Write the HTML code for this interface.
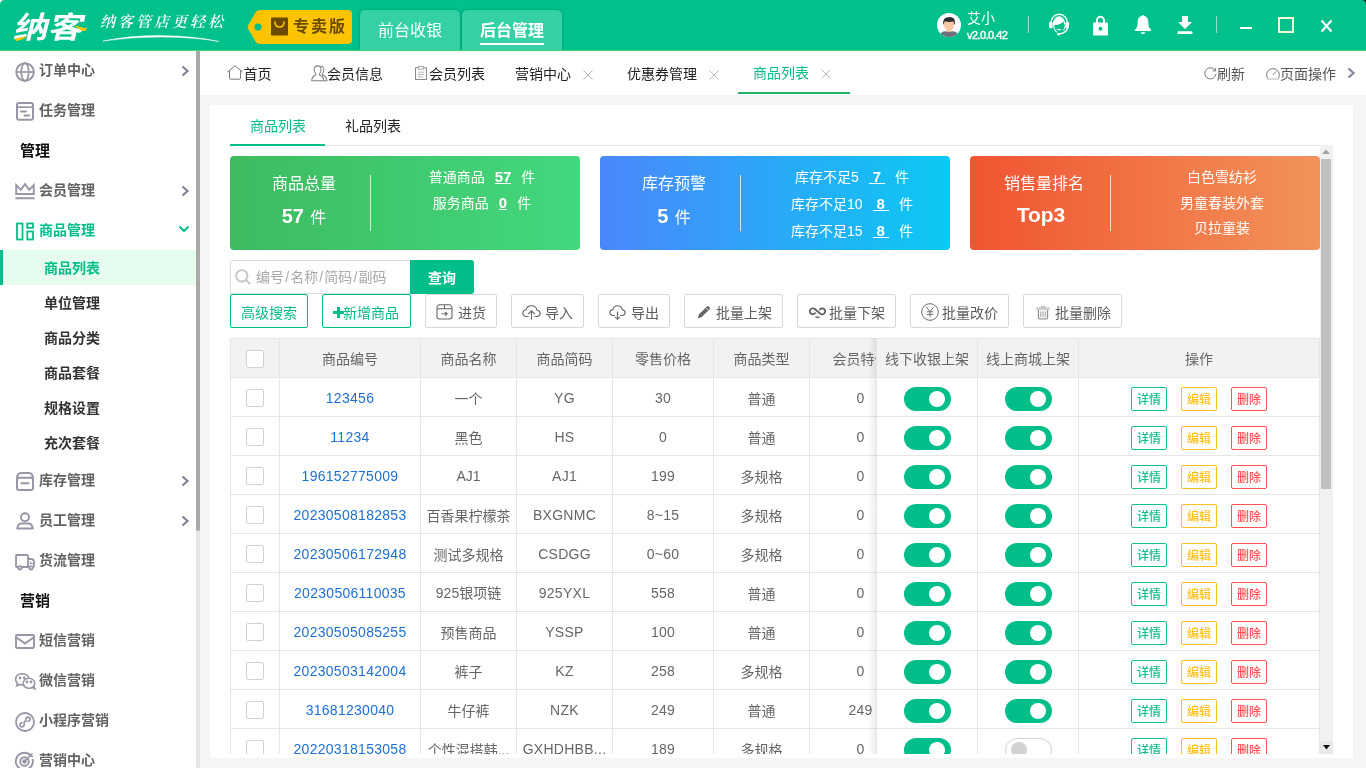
<!DOCTYPE html>
<html lang="zh-CN"><head><meta charset="utf-8"><title>纳客 - 商品列表</title>
<style>
*{box-sizing:border-box;margin:0;padding:0}
html,body{width:1366px;height:768px;overflow:hidden}
body{will-change:transform;position:relative;background:#f5f5f5;font-family:"Liberation Sans","Noto Sans CJK SC",sans-serif;font-size:14px;color:#333;line-height:1}
.a{position:absolute}
svg{display:block;overflow:visible}
#hd{left:0;top:0;width:1366px;height:50px;background:#00c08b}
#hdl{left:0;top:50px;width:1366px;height:1px;background:#3fd46f}
#sb{left:0;top:51px;width:196px;height:717px;background:#fff;overflow:hidden}
.mi{position:absolute;left:0;width:196px;height:40px;line-height:40px;font-weight:bold;color:#626262;font-size:14px;padding-left:39px;white-space:nowrap}
.mi svg{position:absolute}
.mh{position:absolute;left:20px;font-size:15px;font-weight:bold;color:#111;height:40px;line-height:40px}
.si{position:absolute;left:0;width:196px;height:35px;line-height:35px;font-weight:bold;color:#333;font-size:14px;padding-left:44px}
#tb{left:200px;top:51px;width:1166px;height:44px;background:#fff}
.tab{position:absolute;top:1px;height:44px;line-height:44px;font-size:14px;color:#222;white-space:nowrap}
#pn{left:210px;top:105px;width:1143px;height:653px;background:#fff}
.card{position:absolute;top:156px;width:350px;height:94px;border-radius:4px;color:#fff}
.card .t{position:absolute;left:0;width:148px;text-align:center;font-size:16px}
.card .n{position:absolute;left:0;width:148px;text-align:center;font-size:16px}
.card .n b{font-size:20px;margin-right:2px}
.card .dv{position:absolute;left:140px;top:19px;width:1px;height:56px;background:rgba(255,255,255,.75)}
.card .r{position:absolute;left:154px;width:196px;text-align:center;font-size:14px;white-space:nowrap}
.card u{font-weight:bold;font-size:15px;margin:0 10px 0 10px;text-decoration:none;display:inline-block;border-bottom:1px solid #fff;line-height:12px;vertical-align:baseline}
.card u.p{padding:0 4px}
.btn{position:absolute;top:295px;height:33px;line-height:31px;border:1px solid #d8d8d8;border-radius:2px;background:#fff;color:#5c5c5c;font-size:14px;white-space:nowrap;text-align:center}
.btn svg{position:absolute}
.sl{margin:0 1.15px}
.gb{border-color:#00be8a;color:#00be8a}
#tbl{left:230px;top:338px;width:1090px;height:416px;overflow:hidden}
.th{position:absolute;top:0;height:39px;line-height:41px;background:#f2f2f2;border-right:1px solid #e6e6e6;border-bottom:1px solid #e6e6e6;border-top:1px solid #e6e6e6;text-align:center;color:#666;font-size:14px;white-space:nowrap;overflow:hidden}
.td{position:absolute;height:39px;line-height:41px;border-right:1px solid #e6e6e6;border-bottom:1px solid #e6e6e6;text-align:center;color:#666;font-size:14px;white-space:nowrap;overflow:hidden;background:#fff}
.td.lk{color:#1c70d6;letter-spacing:.28px}
.td.nm{letter-spacing:.28px}
.td.cj{line-height:43px}
.cb{position:absolute;left:16px;width:18px;height:18px;border:1px solid #d2d2d2;border-radius:2px;background:#fff}
.sw{position:absolute;width:47px;height:24px;border-radius:12px;background:#00be8a}
.sw i{position:absolute;right:6px;top:4px;width:16px;height:16px;border-radius:8px;background:#fff}
.sw.off{background:#fff;border:1px solid #d2d2d2}
.sw.off i{left:5px;right:auto;top:3px;background:#d2d2d2}
.ob{position:absolute;width:36px;height:24px;line-height:25px;font-weight:500;border:1px solid;border-radius:2px;font-size:12px;text-align:center;background:#fff}
.og{color:#10bf8f;border-color:#10bf8f}
.oy{color:#ffc01f;border-color:#ffc01f}
.or{color:#ff5252;border-color:#ff5252}
</style></head><body>
<div id="hd" class="a">
  <!-- logo -->
  <div class="a" style="left:16px;top:7px;width:62px;height:36px;color:#fff;font-size:30px;font-weight:700;font-family:'Noto Sans CJK SC','Liberation Sans',sans-serif;line-height:36px;letter-spacing:0;transform-origin:0 50%;transform:scaleX(1.16) skewX(-12deg);white-space:nowrap">纳客</div>
  <svg class="a" style="left:0;top:0" width="100" height="50" viewBox="0 0 100 50"><path d="M15 38.5 Q20 38 25.5 36 L25 38 Q20 41 16 41 Z" fill="#fcc400"/><path d="M74 26 Q79 25.5 82 27.5 Q84 28.5 86.5 27 L86 30.5 Q83 31.5 80.5 30 Q77.5 27.5 74 26 Z" fill="#fcc400"/></svg>
  <div class="a" style="left:100px;top:12px;width:130px;height:20px;color:#fff;font-size:15px;font-weight:600;font-family:'Liberation Serif','Noto Serif CJK SC',serif;font-style:italic;letter-spacing:3px;line-height:20px;white-space:nowrap">纳客管店更轻松</div>
  <svg class="a" style="left:100px;top:31px" width="125" height="12" viewBox="0 0 125 12"><path d="M3 10 Q30 4.500 60 4.600 Q95 5 119 10.500 Q95 6.200 60 6 Q30 6 3 10 Z" fill="#fff" stroke="#fff" stroke-width=".5"/></svg>
  <!-- badge -->
  <svg class="a" style="left:246px;top:9px" width="108" height="36" viewBox="0 0 108 36"><path d="M2 16.500 L9.500 3.500 Q11 1 14 1 L102 1 Q106 1 106 5 L106 31 Q106 35 102 35 L14 35 Q11 35 9.500 32.500 L2 19.500 Q1.200 18 2 16.500 Z" fill="#fcc400"/><circle cx="12" cy="18" r="3.600" fill="#00be8a"/><rect x="25" y="8.500" width="17" height="18" rx="1" fill="#6b4b00"/><path d="M29 12.500 Q29 18 33.500 18 Q38 18 38 12.500" fill="none" stroke="#fcc400" stroke-width="1.600"/></svg>
  <div class="a" style="left:293px;top:10px;height:34px;line-height:34px;font-size:16px;font-weight:bold;color:#6b4b00;letter-spacing:2px;white-space:nowrap">专卖版</div>
  <!-- main tabs -->
  <div class="a" style="left:360px;top:10px;width:100px;height:40px;border-radius:5px 5px 0 0;background:#33d1a5;box-shadow:0 0 3px rgba(0,70,45,.35);color:#fff;font-size:16px;line-height:41px;text-align:center">前台收银</div>
  <div class="a" style="left:462px;top:10px;width:100px;height:40px;border-radius:5px 5px 0 0;background:#33d1a5;box-shadow:0 0 3px rgba(0,70,45,.35);color:#fff;font-size:16px;font-weight:bold;line-height:41px;text-align:center">后台管理</div>
  <div class="a" style="left:480px;top:43px;width:64px;height:2px;background:#fff"></div>
  <!-- user -->
  <svg class="a" style="left:937px;top:13px" width="24" height="24" viewBox="0 0 24 24"><defs><clipPath id="avc"><circle cx="12" cy="12" r="12"/></clipPath></defs><circle cx="12" cy="12" r="12" fill="#fff"/><g clip-path="url(#avc)"><rect x="10" y="14" width="4" height="5" fill="#f3c09a"/><path d="M2 26 Q2 18.200 9 18.200 L12 19.300 L15 18.200 Q22 18.200 22 26 Z" fill="#6f6f7d"/><ellipse cx="12" cy="11.800" rx="5" ry="5.900" fill="#f6c9a4"/><path d="M6.300 12 Q5.300 4 11.500 4.200 Q15 3.500 17.300 6 Q18.300 8.500 17.700 12 Q16.500 10.500 16.500 8.500 Q12 9.500 7.800 8.300 Q7.300 10.500 6.300 12 Z" fill="#2e2e33"/></g></svg>
  <div class="a" style="left:967px;top:10px;color:#fff;font-size:14px;line-height:16px;white-space:nowrap">艾小</div>
  <div class="a" style="left:967px;top:28px;color:#fff;font-size:11px;font-weight:normal;-webkit-text-stroke:.4px #fff;line-height:14px;letter-spacing:-.55px;white-space:nowrap">v2.0.0.42</div>
  <div class="a" style="left:1028px;top:16px;width:1px;height:17px;background:rgba(255,255,255,.55)"></div>
  <!-- headset -->
  <svg class="a" style="left:1048px;top:13px" width="22" height="23" viewBox="0 0 22 23"><path d="M3 9.800 A7.900 8.300 0 0 1 19.300 9.800" fill="none" stroke="#fff" stroke-width="1.300"/><rect x="1" y="9" width="3.600" height="6.200" rx="1.200" fill="#fff"/><rect x="17.400" y="9" width="3.600" height="6.200" rx="1.200" fill="#fff"/><path d="M4.700 12 A6.200 8.300 0 0 1 17.300 11.500 L17.300 12.500 Q16 11 15.500 8.800 Q14.800 8.700 14 10 Q11 12 6.500 12.300 Q5.800 12.500 5.800 13.500 Z" fill="#fff"/><path d="M5.800 13 Q6 17.500 9 19.200 M17.200 12.500 Q17 15.500 15.500 17.500" fill="none" stroke="#fff" stroke-width="1.100"/><path d="M8.800 16.300 Q11 17.800 13.200 16.300 Q11 17.200 8.800 16.300 Z" fill="#fff" stroke="#fff" stroke-width=".8"/><path d="M19.600 15 Q18.500 19.800 11.500 21" fill="none" stroke="#fff" stroke-width="1.300"/><circle cx="10.600" cy="21.200" r="1.400" fill="#fff"/></svg>
  <!-- lock -->
  <svg class="a" style="left:1093px;top:15px" width="16" height="21" viewBox="0 0 16 21"><path d="M3.900 9 V5.400 A3.550 3.600 0 0 1 11 5.400 V9" fill="none" stroke="#fff" stroke-width="2"/><rect x="0" y="7.400" width="15" height="13.100" rx="1.300" fill="#fff"/><circle cx="7.500" cy="13.700" r="2" fill="#00c08b"/></svg>
  <!-- bell -->
  <svg class="a" style="left:1134px;top:15px" width="18" height="20" viewBox="0 0 18 20"><path d="M9 0.800 C4.500 0.800 3.600 5 3.600 8 C3.600 11.500 2.800 13 0.800 14.800 Q0.600 16 2 16 H16 Q17.400 16 17.200 14.800 C15.200 13 14.400 11.500 14.400 8 C14.400 5 13.500 0.800 9 0.800 Z" fill="#fff"/><path d="M6.500 17.300 H11.500 Q11 19 9 19 Q7 19 6.500 17.300 Z" fill="#fff"/><circle cx="9" cy="1.300" r="1.200" fill="#fff"/></svg>
  <!-- download -->
  <svg class="a" style="left:1177px;top:15px" width="16" height="20" viewBox="0 0 16 20"><path d="M5 1 H11 V7 H15 L8 14 L1 7 H5 Z" fill="#fff"/><rect x="0.500" y="16.200" width="15" height="2.800" rx="0.800" fill="#fff"/></svg>
  <div class="a" style="left:1216px;top:16px;width:1px;height:17px;background:rgba(255,255,255,.55)"></div>
  <div class="a" style="left:1240px;top:27px;width:12px;height:2px;background:#fff"></div>
  <div class="a" style="left:1278px;top:17px;width:16px;height:16px;border:2px solid #f4fad8"></div>
  <svg class="a" style="left:1320px;top:19px" width="13" height="14" viewBox="0 0 13 14"><path d="M1.500 1.500 L11.500 12.500 M11.500 1.500 L1.500 12.500" stroke="#fff" stroke-width="2.100" fill="none"/></svg>
  <svg class="a" style="left:0;top:0" width="5" height="5" viewBox="0 0 5 5"><path d="M0 0 H4.500 A4.500 4.500 0 0 0 0 4.500 Z" fill="#fff"/></svg>
  <svg class="a" style="left:1361px;top:0" width="5" height="5" viewBox="0 0 5 5"><path d="M5 0 H0.500 A4.500 4.500 0 0 1 5 4.500 Z" fill="#3a1c12"/></svg>
</div>
<div id="hdl" class="a"></div>
<div id="sb" class="a">
  <!-- y offsets relative to sidebar top (51) -->
  <div class="mi" style="top:-1px">订单中心
    <svg style="left:15px;top:12px" width="20" height="20" viewBox="0 0 20 20" fill="none" stroke="#9696a6" stroke-width="1.900"><circle cx="10" cy="10" r="8.800"/><ellipse cx="10" cy="10" rx="3.700" ry="8.800" stroke-width="1.700"/><path d="M1.200 10 H18.800" stroke-width="1.700"/></svg>
    <svg style="left:181px;top:15px" width="8" height="12" viewBox="0 0 8 12" fill="none" stroke="#85859a" stroke-width="2.300"><path d="M1.500 1.500 L6.500 6 L1.500 10.500"/></svg>
  </div>
  <div class="mi" style="top:39px">任务管理
    <svg style="left:16px;top:12px" width="18" height="19" viewBox="0 0 18 19" fill="none" stroke="#9696a6" stroke-width="2"><rect x="1" y="1" width="16" height="16.800" rx="2"/><path d="M1 5.200 H17" stroke-width="1.700"/><path d="M5 9.500 H10 M8.500 13.500 H13" stroke-width="2" stroke-linecap="round"/></svg>
  </div>
  <div class="mh" style="top:80px">管理</div>
  <div class="mi" style="top:119px">会员管理
    <svg style="left:15px;top:13px" width="20" height="17" viewBox="0 0 20 17" fill="none" stroke="#9696a6" stroke-width="1.900"><path d="M1.200 11 V2 L5.800 6.800 L10 1.200 L14.200 6.800 L18.800 2 V11 Z" stroke-linejoin="miter"/><path d="M1.200 15.300 H18.800" stroke-width="2" stroke-linecap="round"/></svg>
    <svg style="left:181px;top:15px" width="8" height="12" viewBox="0 0 8 12" fill="none" stroke="#85859a" stroke-width="2.300"><path d="M1.500 1.500 L6.500 6 L1.500 10.500"/></svg>
  </div>
  <div class="mi" style="top:159px;color:#00be8a">商品管理
    <svg style="left:16px;top:12px" width="18" height="18" viewBox="0 0 18 18" fill="none" stroke="#00be8a" stroke-width="1.800"><rect x="1" y="1.500" width="5.500" height="16"/><rect x="11.300" y="1.500" width="5.700" height="4.300"/><rect x="11.300" y="9.500" width="5.700" height="8"/></svg>
    <svg style="left:178px;top:14.500px" width="12" height="8" viewBox="0 0 12 8" fill="none" stroke="#00be8a" stroke-width="2"><path d="M1.500 1.500 L6 6 L10.500 1.500"/></svg>
  </div>
  <div class="si" style="top:199px;line-height:37px;background:#e6fcee;color:#00be8a;border-left:3px solid #00be8a;padding-left:41px">商品列表</div>
  <div class="si" style="top:234px;line-height:37px">单位管理</div>
  <div class="si" style="top:269px;line-height:37px">商品分类</div>
  <div class="si" style="top:304px;line-height:37px">商品套餐</div>
  <div class="si" style="top:339px;line-height:37px">规格设置</div>
  <div class="si" style="top:374px;line-height:37px">充次套餐</div>
  <div class="mi" style="top:409px">库存管理
    <svg style="left:16px;top:12px" width="18" height="19" viewBox="0 0 18 19" fill="none" stroke="#9696a6" stroke-width="2"><path d="M1 6.500 Q1.300 1 5 1 H13 Q16.700 1 17 6.500"/><rect x="1" y="5.800" width="16" height="12.200" rx="2"/><path d="M5.500 11.300 H12.500" stroke-width="2" stroke-linecap="round"/></svg>
    <svg style="left:181px;top:15px" width="8" height="12" viewBox="0 0 8 12" fill="none" stroke="#85859a" stroke-width="2.300"><path d="M1.500 1.500 L6.500 6 L1.500 10.500"/></svg>
  </div>
  <div class="mi" style="top:449px">员工管理
    <svg style="left:16px;top:12px" width="18" height="18" viewBox="0 0 18 18" fill="none" stroke="#9696a6" stroke-width="1.900"><circle cx="9" cy="5.200" r="4"/><path d="M1.200 16.500 Q2 11.500 5.500 11.500 H12.500 Q16 11.500 16.800 16.500 Z" stroke-linejoin="round"/></svg>
    <svg style="left:181px;top:15px" width="8" height="12" viewBox="0 0 8 12" fill="none" stroke="#85859a" stroke-width="2.300"><path d="M1.500 1.500 L6.500 6 L1.500 10.500"/></svg>
  </div>
  <div class="mi" style="top:489px">货流管理
    <svg style="left:15px;top:14px" width="20" height="17" viewBox="0 0 20 17" fill="none" stroke="#9696a6" stroke-width="1.800"><path d="M3 13 H2 Q1 13 1 12 V2 Q1 1 2 1 H12 Q13 1 13 2 V13 H6.500"/><path d="M13 5 H16.500 Q19 5.500 19 8 V12 Q19 13 18 13 H17.800 M13 13 H14.300"/><path d="M15.500 7.500 V9.500 H19" stroke-width="1.200"/><circle cx="4.800" cy="13.800" r="1.700"/><circle cx="16" cy="13.800" r="1.700"/></svg>
  </div>
  <div class="mh" style="top:530px">营销</div>
  <div class="mi" style="top:569px">短信营销
    <svg style="left:15px;top:14px" width="20" height="15" viewBox="0 0 20 15" fill="none" stroke="#9696a6" stroke-width="1.900"><rect x="1" y="1" width="18" height="13" rx="1.200"/><path d="M1.500 3.500 L10 9.500 L18.500 3.500"/></svg>
  </div>
  <div class="mi" style="top:609px">微信营销
    <svg style="left:15px;top:13px" width="21" height="17" viewBox="0 0 21 17" fill="none" stroke="#9696a6" stroke-width="1.600"><path d="M8 11.800 Q5.500 12 4.300 11.500 L1.800 12.800 L2.500 10.300 Q0.700 8.700 0.700 6.500 Q0.700 1 7.500 0.800 Q12.500 1 13.800 5"/><ellipse cx="14" cy="10.300" rx="5.800" ry="5"/><path d="M17.500 14.500 L19.800 15.800 L19 13.300" /><circle cx="5" cy="5" r=".6" fill="#9a9aa8"/><circle cx="9.300" cy="5" r=".6" fill="#9a9aa8"/><circle cx="12" cy="9" r=".6" fill="#9a9aa8"/><circle cx="16" cy="9" r=".6" fill="#9a9aa8"/></svg>
  </div>
  <div class="mi" style="top:649px">小程序营销
    <svg style="left:15px;top:12px" width="20" height="20" viewBox="0 0 20 20" fill="none" stroke="#9696a6" stroke-width="1.800"><circle cx="10" cy="10" r="9"/><path d="M10.800 7.500 Q11 5.200 13 5.200 Q15 5.400 15 7.300 Q14.800 9.300 12.500 9.300 M9.200 12.500 Q9 14.800 7 14.800 Q5 14.600 5 12.700 Q5.200 10.700 7.500 10.700 M10.800 7.500 V10 M9.200 12.500 V10 Q9.300 9.300 10 9.300 Q10.800 9.500 10.800 10" stroke-width="1.700"/></svg>
  </div>
  <div class="mi" style="top:689px">营销中心
    <svg style="left:15px;top:11px" width="20" height="20" viewBox="0 0 20 20" fill="none" stroke="#9696a6" stroke-width="1.900"><path d="M15 4 A8.500 8.500 0 1 0 17.500 8"/><circle cx="9.500" cy="10.500" r="4.300"/><circle cx="9.500" cy="10.500" r="1.300" fill="#9a9aa8"/><path d="M10 10 L17.500 2.500 M14.500 2 L15 5 L18 5.500" stroke-width="1.500"/></svg>
  </div>
</div>
<!-- sidebar scrollbar -->
<div class="a" style="left:196px;top:51px;width:4px;height:717px;background:#e6e6e6"></div>
<div class="a" style="left:196px;top:51px;width:4px;height:480px;background:#aaa;border-radius:0 0 2px 2px"></div>
<div id="tb" class="a">
  <!-- coordinates relative to left:200 top:51 -->
  <svg class="a" style="left:27px;top:14px" width="16" height="15" viewBox="0 0 16 15" fill="none" stroke="#7a7a7a" stroke-width="1"><path d="M0.300 7 L8 0.800 L15.700 7 M2.500 5.500 V13 Q2.500 14.200 3.700 14.200 H12.300 Q13.500 14.200 13.500 13 V5.500"/></svg>
  <div class="tab" style="left:43.500px">首页</div>
  <svg class="a" style="left:111px;top:14px" width="17" height="17" viewBox="0 0 17 16" preserveAspectRatio="none" fill="none" stroke="#808080" stroke-width="1"><path d="M6.500 0.800 Q10 0.800 10 4.500 Q10 7 8.500 8.300 V9.300 Q12.500 10.500 12.800 14.800 H0.700 Q1 10.500 4.800 9.300 V8.300 Q3.200 7 3.200 4.500 Q3.200 0.800 6.500 0.800 Z"/><path d="M9.500 1.200 Q12.800 1 12.800 4.800 Q12.800 7 11.500 8.300 V9.300 Q15.500 10.500 16 14.800 H13"/></svg>
  <div class="tab" style="left:127px">会员信息</div>
  <svg class="a" style="left:215px;top:15px" width="12" height="14" viewBox="0 0 12 14" fill="none" stroke="#8a8a8a" stroke-width="1"><rect x="0.500" y="1.800" width="11" height="11.700"/><rect x="3.500" y="0.500" width="5" height="2.600" fill="#fff" stroke="#aaa"/><path d="M3 6.200 H9 M3 8.500 H9 M3 10.800 H8" stroke="#aaa" stroke-width=".9"/></svg>
  <div class="tab" style="left:229px">会员列表</div>
  <div class="tab" style="left:315px">营销中心</div>
  <svg class="a" style="left:383px;top:19px" width="10" height="10" viewBox="0 0 10 10" stroke="#b8b8b8" stroke-width="1" fill="none"><path d="M.5 .5 L9.500 9.500 M9.500 .5 L.5 9.500"/></svg>
  <div class="tab" style="left:427px">优惠券管理</div>
  <svg class="a" style="left:509px;top:19px" width="10" height="10" viewBox="0 0 10 10" stroke="#b8b8b8" stroke-width="1" fill="none"><path d="M.5 .5 L9.500 9.500 M9.500 .5 L.5 9.500"/></svg>
  <div class="tab" style="left:553px;color:#00be8a;top:0px">商品列表</div>
  <svg class="a" style="left:621px;top:18px" width="10" height="10" viewBox="0 0 10 10" stroke="#b8b8b8" stroke-width="1" fill="none"><path d="M.5 .5 L9.500 9.500 M9.500 .5 L.5 9.500"/></svg>
  <div class="a" style="left:538px;top:41px;width:112px;height:2px;background:#1db56a"></div>
  <!-- right tools -->
  <svg class="a" style="left:1004px;top:16px" width="13" height="13" viewBox="0 0 13 13" fill="none" stroke="#777" stroke-width="1"><path d="M11.300 3.600 A5.600 5.600 0 1 0 12 6.800"/><path d="M8.600 3.900 H11.600 V0.900"/></svg>
  <div class="tab" style="left:1017px;color:#555">刷新</div>
  <svg class="a" style="left:1066px;top:16px" width="14" height="13" viewBox="0 0 14 13" fill="none" stroke="#777" stroke-width="1"><path d="M1.800 11.500 A6.300 6.300 0 1 1 12.200 11.500"/><path d="M0.800 12 H13.200" stroke="#c4c4c4" stroke-width="1.200"/><path d="M6.800 8 L10 4.500"/></svg>
  <div class="tab" style="left:1080px;color:#555">页面操作</div>
  <svg class="a" style="left:1147px;top:16px" width="8" height="12" viewBox="0 0 8 12" fill="none" stroke="#85859a" stroke-width="2.200"><path d="M1.500 1.500 L6.500 6 L1.500 10.500"/></svg>
</div>
<div id="pn" class="a"></div>
<!-- inner tabs (absolute page coords) -->
<div class="a" style="left:250px;top:116px;height:20px;line-height:20px;font-size:14px;color:#00be8a;white-space:nowrap">商品列表</div>
<div class="a" style="left:345px;top:116px;height:20px;line-height:20px;font-size:14px;color:#222;white-space:nowrap">礼品列表</div>
<div class="a" style="left:230px;top:145px;width:1090px;height:1px;background:#e6e6e6"></div>
<div class="a" style="left:230px;top:144px;width:95px;height:2px;background:#00be8a"></div>
<!-- scroll track -->
<div class="a" style="left:1320px;top:145px;width:13px;height:609px;background:#f1f1f1"></div>
<div class="a" style="left:1321px;top:159px;width:10px;height:330px;background:#c1c1c1"></div>
<svg class="a" style="left:1322px;top:149px" width="8" height="5" viewBox="0 0 8 5"><path d="M0 5 L4 0.500 L8 5 Z" fill="#a3a3a3"/></svg>
<div class="a" style="left:1320px;top:741px;width:13px;height:13px;background:#e8e8e8"></div>
<svg class="a" style="left:1323px;top:745px" width="7" height="5" viewBox="0 0 7 5"><path d="M0 0 L3.500 4.500 L7 0 Z" fill="#111"/></svg>
<!-- cards -->
<div class="card" style="left:230px;background:linear-gradient(90deg,#3dbb5f,#43d87e)">
  <div class="t" style="top:20px">商品总量</div>
  <div class="n" style="top:50px"><b>57</b> 件</div>
  <div class="dv"></div>
  <div class="r" style="top:14px">普通商品<u>57</u>件</div>
  <div class="r" style="top:40px">服务商品<u>0</u>件</div>
</div>
<div class="card" style="left:600px;background:linear-gradient(90deg,#4b87fb,#0bc9f3)">
  <div class="t" style="top:20px">库存预警</div>
  <div class="n" style="top:50px"><b>5</b> 件</div>
  <div class="dv"></div>
  <div class="r" style="top:14px">库存不足5<u class="p">7</u>件</div>
  <div class="r" style="top:41px">库存不足10<u class="p">8</u>件</div>
  <div class="r" style="top:68px">库存不足15<u class="p">8</u>件</div>
</div>
<div class="card" style="left:970px;background:linear-gradient(90deg,#f05431,#f2935b)">
  <div class="t" style="top:20px">销售量排名</div>
  <div class="n" style="top:48px;left:-2px"><b style="font-size:21px">Top3</b></div>
  <div class="dv"></div>
  <div class="r" style="top:14px">白色雪纺衫</div>
  <div class="r" style="top:40px">男童春装外套</div>
  <div class="r" style="top:65px">贝拉童装</div>
</div>
<!-- search -->
<div class="a" style="left:230px;top:260px;width:181px;height:34px;border:1px solid #dcdcdc;border-radius:2px 0 0 2px;background:#fff"></div>
<svg class="a" style="left:235px;top:269px" width="16" height="16" viewBox="0 0 16 16" fill="none" stroke="#c6c6c6" stroke-width="1.900"><circle cx="6.800" cy="6.800" r="5.700"/><path d="M11 11 L15.200 15.200"/></svg>
<div class="a" style="left:256px;top:267px;height:20px;line-height:20px;font-size:14px;color:#a9a9a9;white-space:nowrap">编号<span class="sl">/</span>名称<span class="sl">/</span>简码<span class="sl">/</span>副码</div>
<div class="a" style="left:410px;top:260px;width:64px;height:34px;line-height:36px;background:#00be8a;border-radius:0 3px 3px 0;color:#fff;font-size:14px;font-weight:bold;text-align:center">查询</div>
<!-- buttons -->
<div class="btn gb" style="left:230px;width:78px;top:294px;height:34px;line-height:37px">高级搜索</div>
<div class="btn gb" style="left:322px;width:89px;top:294px;height:34px;line-height:37px;text-align:left;padding-left:20px"><svg style="left:10px;top:12px" width="11" height="11" viewBox="0 0 11 11"><path d="M4 0 H7 V4 H11 V7 H7 V11 H4 V7 H0 V4 H4 Z" fill="#00be8a"/></svg>新增商品</div>
<div class="btn" style="left:425px;width:72px;top:294px;height:34px;line-height:37px;text-align:left;padding-left:32px"><svg style="left:10px;top:9px" width="17" height="16" viewBox="0 0 17 16" fill="none" stroke="#666" stroke-width="1.100"><path d="M1 4.500 Q1 1 4 0.800 H13 Q16 1 16 4.500 V12.500 Q16 15 13.500 15 H3.500 Q1 15 1 12.500 Z"/><path d="M1 4.800 H16 M8.500 0.800 V4.800"/><path d="M5.500 9.800 H11 M9 7.800 L11.200 9.800 L9 11.800"/></svg>进货</div>
<div class="btn" style="left:511px;width:73px;top:294px;height:34px;line-height:37px;text-align:left;padding-left:33px"><svg style="left:10px;top:10px" width="19" height="15" viewBox="0 0 19 15" fill="none" stroke="#666" stroke-width="1.100"><path d="M6.500 11.500 H4.500 Q1 11.300 0.800 8 Q1 5.300 4 4.800 Q5 0.800 9.500 0.800 Q14 0.800 14.800 5 Q18 5.500 18.200 8.500 Q18 11.300 14.800 11.500 H12.500"/><path d="M9.500 14.500 V6 M6.300 9 L9.500 5.800 L12.700 9"/></svg>导入</div>
<div class="btn" style="left:598px;width:72px;top:294px;height:34px;line-height:37px;text-align:left;padding-left:32px"><svg style="left:10px;top:10px" width="17" height="15" viewBox="0 0 17 15" fill="none" stroke="#666" stroke-width="1.100"><path d="M5.800 10.500 H4 Q1 10.300 0.800 7.500 Q1 5 3.800 4.600 Q4.800 0.800 8.500 0.800 Q12.300 0.800 13.200 4.600 Q16 5 16.200 7.800 Q16 10.300 13 10.500 H11.200"/><path d="M8.500 6.500 V14 M6 11.800 L8.500 14.300 L11 11.800"/></svg>导出</div>
<div class="btn" style="left:684px;width:99px;top:294px;height:34px;line-height:37px;text-align:left;padding-left:31px"><svg style="left:12px;top:10px" width="14" height="14" viewBox="0 0 14 14"><path d="M0.800 13.200 L1.800 9.500 L9.800 1.500 Q10.800 0.600 11.800 1.500 L12.500 2.200 Q13.400 3.200 12.500 4.200 L4.500 12.200 Z" fill="#666"/><path d="M9 2.800 L11.200 5" stroke="#fff" stroke-width=".8"/></svg>批量上架</div>
<div class="btn" style="left:797px;width:99px;top:294px;height:34px;line-height:37px;text-align:left;padding-left:31px"><svg style="left:11px;top:12px" width="17" height="12" viewBox="0 0 17 12" fill="none" stroke="#5a5a5a" stroke-width="1.700" stroke-linecap="round"><path d="M6.200 6.100 A3 3 0 1 1 5.800 2 Q8.500 4.300 11.200 6.600 A3 3 0 1 0 10.800 2.500"/><path d="M6.500 10.300 H10.500" stroke-width="1.800" stroke-linecap="butt" stroke="#777"/></svg>批量下架</div>
<div class="btn" style="left:910px;width:99px;top:294px;height:34px;line-height:37px;text-align:left;padding-left:31px"><svg style="left:10px;top:8px" width="18" height="18" viewBox="0 0 19 19" fill="none" stroke="#666" stroke-width="1"><circle cx="9.500" cy="9.500" r="8.800"/><path d="M5.800 4.500 L9.500 9 L13.200 4.500 M9.500 9 V15 M6 9.300 H13 M6 12 H13"/></svg>批量改价</div>
<div class="btn" style="left:1023px;width:99px;top:294px;height:34px;line-height:37px;text-align:left;padding-left:31px"><svg style="left:12px;top:11px" width="14" height="14" viewBox="0 0 14 14"><rect x="0" y="1.300" width="14" height="2.700" rx=".9" fill="#d0d0d0"/><rect x="4.700" y="0.200" width="4.600" height="1.600" rx=".5" fill="#b5b5b5"/><path d="M2.400 4 V11.500 Q2.400 13 3.900 13 H10.100 Q11.600 13 11.600 11.500 V4" fill="#f3f3f3" stroke="#8a8a8a" stroke-width="1.100"/><path d="M4.700 5.500 V11 M7 5.500 V11 M9.300 5.500 V11" stroke="#a5a5a5" stroke-width=".9" fill="none"/></svg>批量删除</div>
<div id="tbl" class="a">
<div class="th" style="left:0px;width:50px;height:40px;border-left:1px solid #e6e6e6"><div class="cb" style="top:11px;left:15px"></div></div>
<div class="th" style="left:50px;width:141px;height:40px">商品编号</div>
<div class="th" style="left:191px;width:96px;height:40px">商品名称</div>
<div class="th" style="left:287px;width:96px;height:40px">商品简码</div>
<div class="th" style="left:383px;width:101px;height:40px">零售价格</div>
<div class="th" style="left:484px;width:96px;height:40px">商品类型</div>
<div class="th" style="left:580px;width:102px;height:40px">会员特价</div>
<div class="td" style="left:0px;top:40px;width:50px;border-left:1px solid #e6e6e6"><div class="cb" style="top:11px;left:15px"></div></div>
<div class="td lk" style="left:50px;top:40px;width:141px">123456</div>
<div class="td cj" style="left:191px;top:40px;width:96px">一个</div>
<div class="td nm" style="left:287px;top:40px;width:96px">YG</div>
<div class="td nm" style="left:383px;top:40px;width:101px">30</div>
<div class="td cj" style="left:484px;top:40px;width:96px">普通</div>
<div class="td nm" style="left:580px;top:40px;width:102px">0</div>
<div class="td" style="left:0px;top:79px;width:50px;border-left:1px solid #e6e6e6"><div class="cb" style="top:11px;left:15px"></div></div>
<div class="td lk" style="left:50px;top:79px;width:141px">11234</div>
<div class="td cj" style="left:191px;top:79px;width:96px">黑色</div>
<div class="td nm" style="left:287px;top:79px;width:96px">HS</div>
<div class="td nm" style="left:383px;top:79px;width:101px">0</div>
<div class="td cj" style="left:484px;top:79px;width:96px">普通</div>
<div class="td nm" style="left:580px;top:79px;width:102px">0</div>
<div class="td" style="left:0px;top:118px;width:50px;border-left:1px solid #e6e6e6"><div class="cb" style="top:11px;left:15px"></div></div>
<div class="td lk" style="left:50px;top:118px;width:141px">196152775009</div>
<div class="td" style="left:191px;top:118px;width:96px">AJ1</div>
<div class="td nm" style="left:287px;top:118px;width:96px">AJ1</div>
<div class="td nm" style="left:383px;top:118px;width:101px">199</div>
<div class="td cj" style="left:484px;top:118px;width:96px">多规格</div>
<div class="td nm" style="left:580px;top:118px;width:102px">0</div>
<div class="td" style="left:0px;top:157px;width:50px;border-left:1px solid #e6e6e6"><div class="cb" style="top:11px;left:15px"></div></div>
<div class="td lk" style="left:50px;top:157px;width:141px">20230508182853</div>
<div class="td cj" style="left:191px;top:157px;width:96px">百香果柠檬茶</div>
<div class="td nm" style="left:287px;top:157px;width:96px">BXGNMC</div>
<div class="td nm" style="left:383px;top:157px;width:101px">8~15</div>
<div class="td cj" style="left:484px;top:157px;width:96px">多规格</div>
<div class="td nm" style="left:580px;top:157px;width:102px">0</div>
<div class="td" style="left:0px;top:196px;width:50px;border-left:1px solid #e6e6e6"><div class="cb" style="top:11px;left:15px"></div></div>
<div class="td lk" style="left:50px;top:196px;width:141px">20230506172948</div>
<div class="td cj" style="left:191px;top:196px;width:96px">测试多规格</div>
<div class="td nm" style="left:287px;top:196px;width:96px">CSDGG</div>
<div class="td nm" style="left:383px;top:196px;width:101px">0~60</div>
<div class="td cj" style="left:484px;top:196px;width:96px">多规格</div>
<div class="td nm" style="left:580px;top:196px;width:102px">0</div>
<div class="td" style="left:0px;top:235px;width:50px;border-left:1px solid #e6e6e6"><div class="cb" style="top:11px;left:15px"></div></div>
<div class="td lk" style="left:50px;top:235px;width:141px">20230506110035</div>
<div class="td" style="left:191px;top:235px;width:96px">925银项链</div>
<div class="td nm" style="left:287px;top:235px;width:96px">925YXL</div>
<div class="td nm" style="left:383px;top:235px;width:101px">558</div>
<div class="td cj" style="left:484px;top:235px;width:96px">普通</div>
<div class="td nm" style="left:580px;top:235px;width:102px">0</div>
<div class="td" style="left:0px;top:274px;width:50px;border-left:1px solid #e6e6e6"><div class="cb" style="top:11px;left:15px"></div></div>
<div class="td lk" style="left:50px;top:274px;width:141px">20230505085255</div>
<div class="td cj" style="left:191px;top:274px;width:96px">预售商品</div>
<div class="td nm" style="left:287px;top:274px;width:96px">YSSP</div>
<div class="td nm" style="left:383px;top:274px;width:101px">100</div>
<div class="td cj" style="left:484px;top:274px;width:96px">普通</div>
<div class="td nm" style="left:580px;top:274px;width:102px">0</div>
<div class="td" style="left:0px;top:313px;width:50px;border-left:1px solid #e6e6e6"><div class="cb" style="top:11px;left:15px"></div></div>
<div class="td lk" style="left:50px;top:313px;width:141px">20230503142004</div>
<div class="td cj" style="left:191px;top:313px;width:96px">裤子</div>
<div class="td nm" style="left:287px;top:313px;width:96px">KZ</div>
<div class="td nm" style="left:383px;top:313px;width:101px">258</div>
<div class="td cj" style="left:484px;top:313px;width:96px">多规格</div>
<div class="td nm" style="left:580px;top:313px;width:102px">0</div>
<div class="td" style="left:0px;top:352px;width:50px;border-left:1px solid #e6e6e6"><div class="cb" style="top:11px;left:15px"></div></div>
<div class="td lk" style="left:50px;top:352px;width:141px">31681230040</div>
<div class="td cj" style="left:191px;top:352px;width:96px">牛仔裤</div>
<div class="td nm" style="left:287px;top:352px;width:96px">NZK</div>
<div class="td nm" style="left:383px;top:352px;width:101px">249</div>
<div class="td cj" style="left:484px;top:352px;width:96px">普通</div>
<div class="td nm" style="left:580px;top:352px;width:102px">249</div>
<div class="td" style="left:0px;top:391px;width:50px;border-left:1px solid #e6e6e6"><div class="cb" style="top:11px;left:15px"></div></div>
<div class="td lk" style="left:50px;top:391px;width:141px">20220318153058</div>
<div class="td cj" style="left:191px;top:391px;width:96px">个性混搭韩...</div>
<div class="td nm" style="left:287px;top:391px;width:96px">GXHDHBB...</div>
<div class="td nm" style="left:383px;top:391px;width:101px">189</div>
<div class="td cj" style="left:484px;top:391px;width:96px">多规格</div>
<div class="td nm" style="left:580px;top:391px;width:102px">0</div>
<div class="a" style="left:638px;top:0;width:8px;height:430px;background:linear-gradient(90deg,rgba(0,0,0,0),rgba(0,0,0,.07))"></div>
<div class="th" style="left:646px;width:102px;height:40px;border-left:1px solid #e6e6e6">线下收银上架</div>
<div class="th" style="left:748px;width:101px;height:40px">线上商城上架</div>
<div class="th" style="left:849px;width:241px;height:40px">操作</div>
<div class="td" style="left:646px;top:40px;width:102px;border-left:1px solid #e6e6e6"><div class="sw" style="left:27px;top:9px"><i></i></div></div>
<div class="td" style="left:748px;top:40px;width:101px"><div class="sw" style="left:27px;top:9px"><i></i></div></div>
<div class="td" style="left:849px;top:40px;width:241px"><div class="ob og" style="left:52px;top:9px">详情</div><div class="ob oy" style="left:102px;top:9px">编辑</div><div class="ob or" style="left:152px;top:9px">删除</div></div>
<div class="td" style="left:646px;top:79px;width:102px;border-left:1px solid #e6e6e6"><div class="sw" style="left:27px;top:9px"><i></i></div></div>
<div class="td" style="left:748px;top:79px;width:101px"><div class="sw" style="left:27px;top:9px"><i></i></div></div>
<div class="td" style="left:849px;top:79px;width:241px"><div class="ob og" style="left:52px;top:9px">详情</div><div class="ob oy" style="left:102px;top:9px">编辑</div><div class="ob or" style="left:152px;top:9px">删除</div></div>
<div class="td" style="left:646px;top:118px;width:102px;border-left:1px solid #e6e6e6"><div class="sw" style="left:27px;top:9px"><i></i></div></div>
<div class="td" style="left:748px;top:118px;width:101px"><div class="sw" style="left:27px;top:9px"><i></i></div></div>
<div class="td" style="left:849px;top:118px;width:241px"><div class="ob og" style="left:52px;top:9px">详情</div><div class="ob oy" style="left:102px;top:9px">编辑</div><div class="ob or" style="left:152px;top:9px">删除</div></div>
<div class="td" style="left:646px;top:157px;width:102px;border-left:1px solid #e6e6e6"><div class="sw" style="left:27px;top:9px"><i></i></div></div>
<div class="td" style="left:748px;top:157px;width:101px"><div class="sw" style="left:27px;top:9px"><i></i></div></div>
<div class="td" style="left:849px;top:157px;width:241px"><div class="ob og" style="left:52px;top:9px">详情</div><div class="ob oy" style="left:102px;top:9px">编辑</div><div class="ob or" style="left:152px;top:9px">删除</div></div>
<div class="td" style="left:646px;top:196px;width:102px;border-left:1px solid #e6e6e6"><div class="sw" style="left:27px;top:9px"><i></i></div></div>
<div class="td" style="left:748px;top:196px;width:101px"><div class="sw" style="left:27px;top:9px"><i></i></div></div>
<div class="td" style="left:849px;top:196px;width:241px"><div class="ob og" style="left:52px;top:9px">详情</div><div class="ob oy" style="left:102px;top:9px">编辑</div><div class="ob or" style="left:152px;top:9px">删除</div></div>
<div class="td" style="left:646px;top:235px;width:102px;border-left:1px solid #e6e6e6"><div class="sw" style="left:27px;top:9px"><i></i></div></div>
<div class="td" style="left:748px;top:235px;width:101px"><div class="sw" style="left:27px;top:9px"><i></i></div></div>
<div class="td" style="left:849px;top:235px;width:241px"><div class="ob og" style="left:52px;top:9px">详情</div><div class="ob oy" style="left:102px;top:9px">编辑</div><div class="ob or" style="left:152px;top:9px">删除</div></div>
<div class="td" style="left:646px;top:274px;width:102px;border-left:1px solid #e6e6e6"><div class="sw" style="left:27px;top:9px"><i></i></div></div>
<div class="td" style="left:748px;top:274px;width:101px"><div class="sw" style="left:27px;top:9px"><i></i></div></div>
<div class="td" style="left:849px;top:274px;width:241px"><div class="ob og" style="left:52px;top:9px">详情</div><div class="ob oy" style="left:102px;top:9px">编辑</div><div class="ob or" style="left:152px;top:9px">删除</div></div>
<div class="td" style="left:646px;top:313px;width:102px;border-left:1px solid #e6e6e6"><div class="sw" style="left:27px;top:9px"><i></i></div></div>
<div class="td" style="left:748px;top:313px;width:101px"><div class="sw" style="left:27px;top:9px"><i></i></div></div>
<div class="td" style="left:849px;top:313px;width:241px"><div class="ob og" style="left:52px;top:9px">详情</div><div class="ob oy" style="left:102px;top:9px">编辑</div><div class="ob or" style="left:152px;top:9px">删除</div></div>
<div class="td" style="left:646px;top:352px;width:102px;border-left:1px solid #e6e6e6"><div class="sw" style="left:27px;top:9px"><i></i></div></div>
<div class="td" style="left:748px;top:352px;width:101px"><div class="sw" style="left:27px;top:9px"><i></i></div></div>
<div class="td" style="left:849px;top:352px;width:241px"><div class="ob og" style="left:52px;top:9px">详情</div><div class="ob oy" style="left:102px;top:9px">编辑</div><div class="ob or" style="left:152px;top:9px">删除</div></div>
<div class="td" style="left:646px;top:391px;width:102px;border-left:1px solid #e6e6e6"><div class="sw" style="left:27px;top:9px"><i></i></div></div>
<div class="td" style="left:748px;top:391px;width:101px"><div class="sw off" style="left:27px;top:9px"><i></i></div></div>
<div class="td" style="left:849px;top:391px;width:241px"><div class="ob og" style="left:52px;top:9px">详情</div><div class="ob oy" style="left:102px;top:9px">编辑</div><div class="ob or" style="left:152px;top:9px">删除</div></div>
</div>
</body></html>
